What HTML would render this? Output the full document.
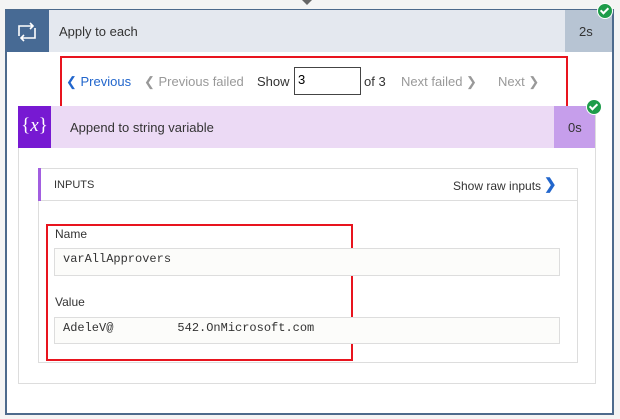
<!DOCTYPE html>
<html><head><style>
body{margin:0;width:620px;height:419px;background:#f4f4f4;font-family:"Liberation Sans",sans-serif;position:relative;overflow:hidden}
.a{position:absolute}
.chk{width:14px;height:14px;border-radius:50%;background:#1e9c4a;border:1px solid #fff}
.chk:after{content:"";position:absolute;left:4px;top:2px;width:3px;height:6px;border:solid #fff;border-width:0 2px 2px 0;transform:rotate(45deg)}
.t{font-size:13px;color:#333}
.mono{font-family:"Liberation Mono",monospace;font-size:12px;color:#333}
</style></head><body>
<div class="a" style="left:302px;top:0;width:0;height:0;border-left:5px solid transparent;border-right:5px solid transparent;border-top:5px solid #666"></div>
<div class="a" style="left:5px;top:9px;width:605px;height:402px;border:2px solid #4d6a8c;background:#fff"></div>
<div class="a" style="left:6px;top:10px;width:43px;height:42px;background:#476a94"></div>
<svg class="a" style="left:15px;top:22px" width="24" height="20" viewBox="0 0 24 20"><path d="M4 14V4h14M15 1l3 3-3 3M20 6v10H6M9 19l-3-3 3-3" fill="none" stroke="#fff" stroke-width="1.6"/></svg>
<div class="a" style="left:49px;top:10px;width:516px;height:42px;background:#e4e8ef"></div>
<div class="a t" style="left:59px;top:24px">Apply to each</div>
<div class="a" style="left:565px;top:10px;width:47px;height:42px;background:#b7c4d3"></div>
<div class="a t" style="left:579px;top:24px">2s</div>
<div class="a chk" style="left:597px;top:3px"></div>
<div class="a" style="left:60px;top:56px;width:504px;height:50px;border:2px solid #e8141e"></div>
<div class="a" style="left:66px;top:74px;font-size:13px;color:#2266cc">❮ Previous</div>
<div class="a" style="left:144px;top:74px;font-size:13px;color:#999">❮ Previous failed</div>
<div class="a t" style="left:257px;top:74px">Show</div>
<div class="a" style="left:294px;top:67px;border:1px solid #444;background:#fff;font-size:13px;line-height:24px;padding-left:3px;box-sizing:border-box;width:67px;height:28px">3</div>
<div class="a t" style="left:364px;top:74px">of 3</div>
<div class="a" style="left:401px;top:74px;font-size:13px;color:#999">Next failed ❯</div>
<div class="a" style="left:498px;top:74px;font-size:13px;color:#999">Next ❯</div>
<div class="a" style="left:18px;top:106px;width:576px;height:276px;border:1px solid #ddd;background:#fff"></div>
<div class="a" style="left:18px;top:106px;width:33px;height:42px;background:#7719d2;color:#fff;font-family:'Liberation Serif',serif;font-size:19px;line-height:40px;text-align:center">{<i>x</i>}</div>
<div class="a" style="left:51px;top:106px;width:503px;height:42px;background:#ecdaf5"></div>
<div class="a t" style="left:70px;top:120px">Append to string variable</div>
<div class="a" style="left:554px;top:106px;width:41px;height:42px;background:#c69eeb"></div>
<div class="a t" style="left:568px;top:120px">0s</div>
<div class="a chk" style="left:586px;top:99px"></div>
<div class="a" style="left:38px;top:168px;width:538px;height:193px;border:1px solid #ddd"></div>
<div class="a" style="left:38px;top:168px;width:539px;height:33px;border-bottom:1px solid #ddd;box-sizing:border-box"></div>
<div class="a" style="left:38px;top:168px;width:3px;height:33px;background:#a25ee0"></div>
<div class="a" style="left:54px;top:179px;font-size:11px;color:#333">INPUTS</div>
<div class="a" style="left:453px;top:179px;font-size:12px;color:#333">Show raw inputs</div>
<div class="a" style="left:544px;top:175px;font-size:15px;color:#2266cc;font-weight:bold">❯</div>
<div class="a" style="left:46px;top:224px;width:303px;height:133px;border:2px solid #e8141e"></div>
<div class="a" style="left:55px;top:227px;font-size:12px;color:#333">Name</div>
<div class="a mono" style="left:54px;top:248px;border:1px solid #ddd;background:#fcfcfa;line-height:21px;padding-left:8px;box-sizing:border-box;width:506px;height:28px">varAllApprovers</div>
<div class="a" style="left:55px;top:295px;font-size:12px;color:#333">Value</div>
<div class="a mono" style="left:54px;top:317px;border:1px solid #ddd;background:#fcfcfa;line-height:20px;padding-left:8px;box-sizing:border-box;width:506px;height:27px">AdeleV@<span style="display:inline-block;width:64px"></span>542.OnMicrosoft.com</div>
</body></html>
